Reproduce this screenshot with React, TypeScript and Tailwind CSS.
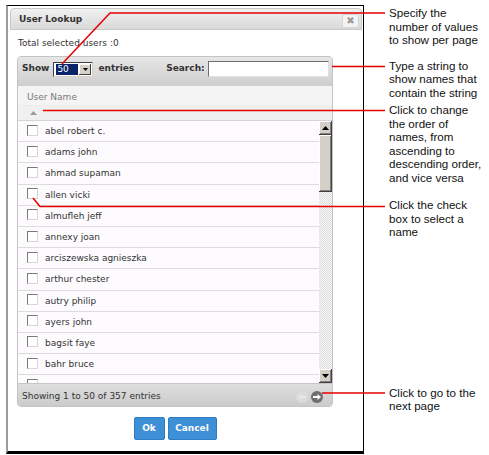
import React from "react";

const names = [
  "abel robert c.",
  "adams john",
  "ahmad supaman",
  "allen vicki",
  "almufleh jeff",
  "annexy joan",
  "arciszewska agnieszka",
  "arthur chester",
  "autry philip",
  "ayers john",
  "bagsit faye",
  "bahr bruce",
  "",
];

function Checkbox() {
  return (
    <span className="block h-[11px] w-[11px] shrink-0 border border-t-[#7a7a7a] border-l-[#7a7a7a] border-r-[#d6d6d6] border-b-[#d6d6d6] bg-white" />
  );
}

function ScrollButton({ up }: { up: boolean }) {
  return (
    <div className="flex h-[14px] w-full items-center justify-center bg-[#d4d0c8] shadow-[inset_-1px_-1px_0_#404040,inset_1px_1px_0_#ffffff,inset_-2px_-2px_0_#808080]">
      <svg width="7" height="4" viewBox="0 0 7 4">
        {up ? <polygon points="3.5,0 7,4 0,4" fill="#000" /> : <polygon points="0,0 7,0 3.5,4" fill="#000" />}
      </svg>
    </div>
  );
}

export default function App() {
  return (
    <div className="relative flex h-[455px] w-[489px] overflow-hidden bg-white font-['DejaVu_Sans',sans-serif] text-[9px] text-[#333]">
      {/* Dialog frame */}
      <div className="ml-[6px] mt-[5px] flex h-[449px] w-[358px] shrink-0 flex-col border-t border-r border-b-[3px] border-l-2 border-t-black border-r-black border-b-black border-l-[#9c9c9c] bg-white">
        {/* Title bar */}
        <div className="ml-[2px] mr-[1px] mt-[2px] flex h-[22px] items-start rounded-t-[4px] border border-[#c9c9c9] bg-linear-to-b from-[#f1f1f1] to-[#d9d9d9]">
          <span className="ml-[8px] mt-[4px] font-bold leading-[12px] text-[#333]">User Lookup</span>
          <span className="ml-auto mr-[2px] mt-[5px] flex h-[14px] w-[17px] items-center justify-center rounded-[2px] border border-[#d6d6d6] bg-[#f3f3f3] text-[10px] font-bold leading-none text-[#9a9a9a]">
            ✖
          </span>
        </div>

        <div className="flex flex-col px-[9px]">
          <div className="ml-[1px] mt-[7px] h-[12px] leading-[12px]">Total selected users :0</div>

          {/* Table wrapper */}
          <div className="mt-[7px] flex w-[316px] flex-col overflow-hidden rounded-[4px] border border-[#c4c4c4]">
            {/* Toolbar */}
            <div className="flex h-[29px] items-center bg-linear-to-b from-[#e6e6e6] to-[#cecece] pb-[5px]">
              <span className="ml-[4px] font-bold">Show</span>
              <div className="ml-[4px] flex h-[15px] w-[40px] items-center border border-t-[#404040] border-l-[#404040] border-r-[#d4d0c8] border-b-[#d4d0c8] bg-white">
                <span className="ml-[2px] h-[11px] w-[22px] bg-[#0a246a] pl-[1px] leading-[11px] text-white">50</span>
                <span className="ml-auto mr-[1px] flex h-[11px] w-[12px] items-center justify-center bg-[#d4d0c8] shadow-[inset_-1px_-1px_0_#404040,inset_1px_1px_0_#ffffff]">
                  <svg width="5" height="3" viewBox="0 0 5 3">
                    <polygon points="0,0 5,0 2.5,3" fill="#000" />
                  </svg>
                </span>
              </div>
              <span className="ml-[5px] font-bold">entries</span>
              <span className="ml-[32px] font-bold">Search:</span>
              <div className="ml-[3px] h-[16px] w-[121px] border border-t-[#6e6e6e] border-l-[#6e6e6e] border-r-[#e0e0e0] border-b-[#e0e0e0] bg-white" />
            </div>

            {/* Column header */}
            <div className="flex h-[35px] flex-col border-b border-[#d4d4d4] bg-[#f4f4f4]">
              <div className="h-[20px] border-b border-[#ececec] pl-[9px] pt-[5px] leading-[12px] text-[#7a7a7a]">User Name</div>
              <div className="flex flex-1 items-center bg-[#f0f0f0] pl-[12px]">
                <svg width="7" height="4" viewBox="0 0 7 4">
                  <polygon points="3.5,0 7,4 0,4" fill="#9a9a9a" />
                </svg>
              </div>
            </div>

            {/* Body */}
            <div className="flex h-[262px]">
              <div className="flex w-[301px] flex-col overflow-hidden">
                {names.map((n, i) => (
                  <div key={i} className="flex h-[21.2px] shrink-0 items-center border-b border-[#dcdcdc] bg-[#fdfbfd] pl-[9px]">
                    <span className="-mt-[2px]">
                      <Checkbox />
                    </span>
                    {n && <span className="ml-[7px] leading-[12px]">{n}</span>}
                  </div>
                ))}
              </div>
              <div className="flex w-[13px] flex-col">
                <ScrollButton up={true} />
                <div className="h-[57px] w-full bg-[#d4d0c8] shadow-[inset_-1px_-1px_0_#404040,inset_1px_1px_0_#ffffff,inset_-2px_-2px_0_#808080]" />
                <div className="flex-1 bg-[repeating-conic-gradient(#dcdcdc_0%_25%,#f8f8f8_0%_50%)] bg-size-[2px_2px]" />
                <ScrollButton up={false} />
              </div>
            </div>

            {/* Footer */}
            <div className="flex h-[23px] items-center border-t border-[#c6c6c6] bg-linear-to-b from-[#dedede] to-[#cbcbcb] pt-[4px]">
              <span className="ml-[4px]">Showing 1 to 50 of 357 entries</span>
              <span className="ml-auto flex h-[12px] w-[12px] items-center justify-center rounded-full bg-[#dcdcdc]">
                <svg width="8" height="6" viewBox="0 0 8 6">
                  <polygon points="0,3 3.5,0 3.5,2 8,2 8,4 3.5,4 3.5,6" fill="#e8e8e8" />
                </svg>
              </span>
              <span className="ml-[3px] mr-[9px] flex h-[12px] w-[12px] items-center justify-center rounded-full bg-[#6e6e6e]">
                <svg width="8" height="6" viewBox="0 0 8 6">
                  <polygon points="8,3 4.5,0 4.5,2 0,2 0,4 4.5,4 4.5,6" fill="#ffffff" />
                </svg>
              </span>
            </div>
          </div>

          {/* Buttons */}
          <div className="mt-[10px] flex w-[316px] justify-center gap-[3px]">
            <button className="h-[23px] w-[31px] rounded-[2px] border border-[#2d7cc2] bg-[#3d8fd6] font-bold text-white">Ok</button>
            <button className="h-[23px] w-[49px] rounded-[2px] border border-[#2d7cc2] bg-[#3d8fd6] font-bold text-white">Cancel</button>
          </div>
        </div>
      </div>

      {/* Annotations */}
      <div className="ml-[25px] flex flex-col font-['Liberation_Sans',Arial,sans-serif] text-[11.6px] leading-[13.5px] text-[#111]">
        <div className="mt-[6px]">
          Specify the
          <br />
          number of values
          <br />
          to show per page
        </div>
        <div className="mt-[12px]">
          Type a string to
          <br />
          show names that
          <br />
          contain the string
        </div>
        <div className="mt-[4px]">
          Click to change
          <br />
          the order of
          <br />
          names, from
          <br />
          ascending to
          <br />
          descending order,
          <br />
          and vice versa
        </div>
        <div className="mt-[14px]">
          Click the check
          <br />
          box to select a
          <br />
          name
        </div>
        <div className="mt-[147px]">
          Click to go to the
          <br />
          next page
        </div>
      </div>

      {/* Callout lines */}
      <svg className="pointer-events-none absolute left-0 top-0" width="489" height="455" viewBox="0 0 489 455">
        <g fill="none" stroke="#e60000" strokeWidth="1.5">
          <polyline points="62,64 110,13 385,13" />
          <line x1="332" y1="66.5" x2="385" y2="66.5" />
          <line x1="43" y1="110.5" x2="385" y2="110.5" />
          <polyline points="33,198 40,206.5 385,206.5" />
          <line x1="322" y1="393" x2="385" y2="393" />
        </g>
      </svg>
    </div>
  );
}
